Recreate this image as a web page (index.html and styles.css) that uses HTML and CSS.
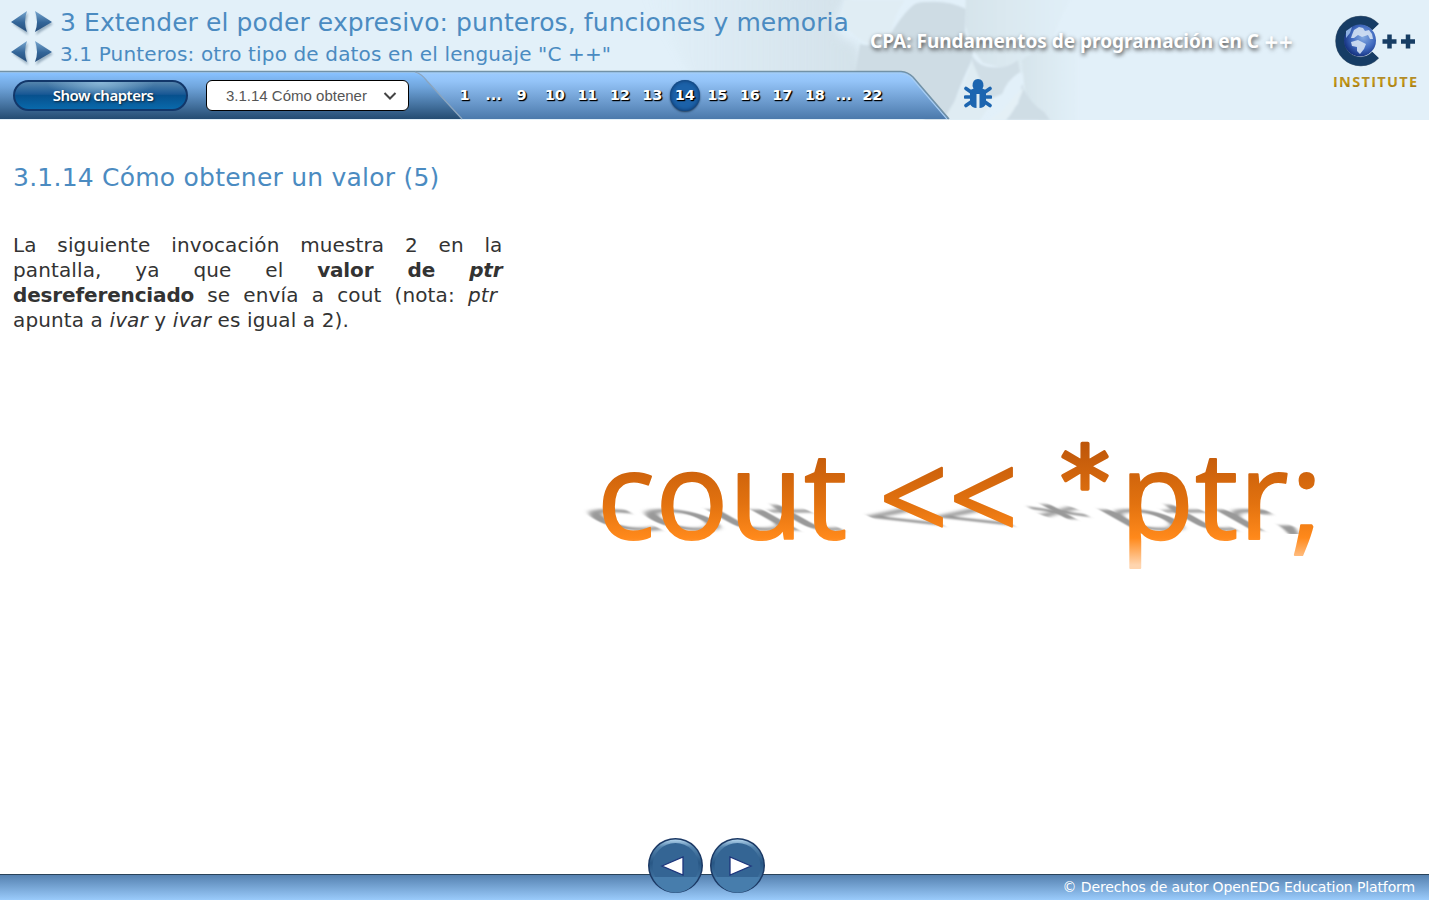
FILE: index.html
```html
<!DOCTYPE html>
<html lang="es">
<head>
<meta charset="utf-8">
<title>3.1.14 Cómo obtener un valor (5)</title>
<link rel="stylesheet" href="styles.css">
</head>
<body>
<svg class="defs" width="0" height="0">
  <defs>
    <linearGradient id="arrow" x1="0" y1="0" x2="0" y2="1"><stop offset="0" stop-color="#77a6cf"/><stop offset=".55" stop-color="#336598"/><stop offset="1" stop-color="#254d7b"/></linearGradient>
    <symbol id="arrows" viewBox="0 0 46 28">
      <g class="arrow-shadow"><path d="M3 14 18 3 16 14 18 25Z"/><path d="M26 3 43 14 26 25 29 14Z"/></g>
      <path d="M1 12 17 1Q13 12 17 22Z" fill="url(#arrow)"/><path d="M25 1 42 12 25 22Q29 12 25 1Z" fill="url(#arrow)"/>
    </symbol>
  </defs>
</svg>
<header class="header">
  <svg class="backdrop" width="1429" height="120" viewBox="0 0 1429 120">
    <defs>
      <linearGradient id="bar" x1="0" y1="0" x2="0" y2="1"><stop offset="0" stop-color="#9dccff"/><stop offset=".2" stop-color="#94c4f8"/><stop offset="1" stop-color="#4b79ab"/></linearGradient>
      <linearGradient id="tab" x1="0" y1="0" x2="0" y2="1"><stop offset="0" stop-color="#88c2ff"/><stop offset=".3" stop-color="#70a5dc"/><stop offset="1" stop-color="#244c72"/></linearGradient>
      <linearGradient id="fade"><stop offset="0" stop-color="#cedce4" stop-opacity="0"/><stop offset="1" stop-color="#cedce4"/></linearGradient>
      <linearGradient id="fadeout"><stop offset="0" stop-color="#d6e4eb"/><stop offset="1" stop-color="#e2f0f9"/></linearGradient>
      <filter id="soft"><feGaussianBlur stdDeviation="1"/></filter>
      <filter id="softer"><feGaussianBlur stdDeviation="5"/></filter>
    </defs>
    <rect width="1429" height="120" fill="#e2f0f9"/>
    <path d="M640 -10H850L835 20Q835 40 856 43L870 90H700Z" fill="url(#fade)" opacity=".75" filter="url(#softer)"/>
    <path d="M966 -10H1080Q1060 10 1050 50L1030 75 983 63 972 48 965 25Z" fill="url(#fadeout)" filter="url(#soft)"/>
    <path d="M1022 60Q1040 45 1080 50V130H1050Q1026 112 1024 84Z" fill="url(#fadeout)" filter="url(#soft)"/>
    <g filter="url(#soft)">
      <path d="M844 0H905Q894 15 891 34L880 48Q858 43 842 22Z" fill="#e0edf4"/>
      <path d="M860 44Q876 49 890 35 900 18 910 8 916 1 926 2 948 0 966 9L965 33Q969 45 973 52L971 62Q961 82 948 120H925L890 75H855Z" fill="#cedce4"/>
      <path d="M969 50Q976 66 990 67 1008 69 1018 60L1020 72Q1007 80 1002 94L980 103Q972 86 972 58Z" fill="#d0dee6"/>
      <path d="M1022 84Q1029 103 1044 112L1050 120H1000L1018 104Z" fill="#cfdde5"/>
      <path d="M946 115Q963 90 972 61L982 84 990 105 980 120H950Z" fill="#dfecf3"/>
      <path d="M1024 87Q1013 97 1001 112L989 120H1006Q1015 112 1024 87Z" fill="#e4f0f6"/>
    </g>
    <path d="M0 71.5H900Q907 72 912 76L949 119H0Z" fill="url(#bar)"/>
    <path d="M0 73H898Q907 74 911 77L947 119" fill="none" stroke="#a8cdf2" stroke-width="1.2"/>
    <path d="M0 71.5H901Q908 72 913 77L949 119" fill="none" stroke="#7292a7" stroke-width="1.5"/>
    <path d="M0 73H415Q421 74 427 81L462 119H0Z" fill="url(#tab)"/>
    <path d="M415 72Q422 74 427 81L462 119" fill="none" stroke="#8ba5be" stroke-width="1.3"/>
  </svg>
  <div class="titles">
    <div class="title-row"><svg class="arrows" width="46" height="28"><use href="#arrows"/></svg><h1 class="chapter">3 Extender el poder expresivo: punteros, funciones y memoria</h1></div>
    <div class="title-row"><svg class="arrows" width="46" height="28"><use href="#arrows"/></svg><h2 class="section">3.1 Punteros: otro tipo de datos en el lenguaje "C ++"</h2></div>
  </div>
  <div class="course">CPA: Fundamentos de programación en C <span class="plus">++</span></div>
  <svg class="logo" width="100" height="85" viewBox="0 0 100 85">
    <defs>
      <radialGradient id="globe" cx=".6" cy=".4" r=".65"><stop offset="0" stop-color="#85abe1"/><stop offset=".55" stop-color="#416bc0"/><stop offset="1" stop-color="#102c79"/></radialGradient>
      <linearGradient id="gold" x1="0" y1="0" x2="0" y2="1"><stop offset="0" stop-color="#8f7740"/><stop offset=".5" stop-color="#c99a1a"/><stop offset="1" stop-color="#8c6510"/></linearGradient>
    </defs>
    <path d="M50.500 17A20.5 20.5 0 1 0 50.500 45" fill="none" stroke="#52677b" stroke-width="9.5"/>
    <path d="M50.500 17A20.5 20.5 0 1 0 50.500 45" fill="none" stroke="#163c65" stroke-width="8.5"/>
    <circle cx="35" cy="30.5" r="16" fill="url(#globe)"/>
    <path d="M27 25 29 20 34 17 38 18 40 21 44 20 47 24 48 29 45 29 43 25 37 27 33 25 29 28 26 28ZM26 32 33 30 41 34 39 39 35 44 32 41 32 37 27 36Z" fill="#d3e1f3" opacity=".9"/>
    <path d="M21 21 27 17 25 23 21 28Z" fill="#8eb1e2"/>
    <path d="M57.5 31.5H71.5M64.5 24.5V38.500M76 31.500H90M83 24.500V38.500" stroke="#173d64" stroke-width="4.500"/>
    <text class="institute" x="8" y="77" textLength="84" fill="url(#gold)">INSTITUTE</text>
  </svg>
  <nav class="toolbar">
    <button class="chapters"><span>Show chapters</span></button>
    <div class="select"><span>3.1.14 Cómo obtener</span><svg width="14" height="10" viewBox="0 0 14 10"><path d="M1.500 2 7 7.500 12.500 2" fill="none" stroke="#444" stroke-width="2"/></svg></div>
    <div class="pages"><a class="one">1</a><a class="dots">...</a><a class="nine">9</a><a>10</a><a>11</a><a>12</a><a>13</a><a class="current">14</a><a>15</a><a>16</a><a>17</a><a>18</a><a class="dots end">...</a><a>22</a></div>
    <svg class="bug" width="28" height="30" viewBox="0 0 28 30">
      <path d="M8.500 7Q8.500 0 14 0T19.500 7L18 11H10Z" fill="#1c65b0"/>
      <path d="M6 11Q14 7 22 11V25Q20 29 15.500 29V15H12.500V29Q8 29 6 25Z" fill="#1c65b0"/>
      <path d="M7 13 2 9.500M6 18H1.500M7 23 2 26.500M21 13 26 9.500M22 18H26.500M21 23 26 26.500" stroke="#1c65b0" stroke-width="3.600" stroke-linecap="round"/>
    </svg>
  </nav>
</header>
<main class="content">
  <section class="lesson">
    <h3 class="heading">3.1.14 Cómo obtener un valor (5)</h3>
    <p class="text"><span class="line">La siguiente invocación muestra 2 en la</span><span class="line">pantalla, ya que el <b>valor de <i>ptr</i></b></span><span class="line third"><b>desreferenciado</b> se envía a cout (nota: <i>ptr</i></span><span class="line last">apunta a <i>ivar</i> y <i>ivar</i> es igual a 2).</span></p>
  </section>
  <svg class="code" width="760" height="160" viewBox="580 420 760 160">
    <defs>
      <linearGradient id="orange" gradientUnits="userSpaceOnUse" x1="0" y1="442" x2="0" y2="565"><stop offset="0" stop-color="#bd560a"/><stop offset=".5" stop-color="#e2720f"/><stop offset=".78" stop-color="#ff891b"/><stop offset="1" stop-color="#ffd5af"/></linearGradient>
      <filter id="shade" filterUnits="userSpaceOnUse" x="550" y="-150" width="860" height="220"><feGaussianBlur stdDeviation="1.800 4.500"/></filter>
      <clipPath id="ground"><rect x="560" y="480" width="780" height="54"/></clipPath>
    </defs>
    <g clip-path="url(#ground)"><g transform="matrix(1 0 .55 .31 0 530)" filter="url(#shade)"><text class="glyphs cast" aria-hidden="true" y="0" x="608 664 734 802 888 958">cout&lt;&lt;</text><text class="glyphs star cast" aria-hidden="true" x="1066" y="-8">*</text><text class="glyphs cast" aria-hidden="true" y="0" x="1126 1196 1242 1278">ptr;</text></g></g>
    <g fill="url(#orange)" stroke="url(#orange)">
      <text class="glyphs" y="538.500" x="597 655.500 729 804">cout</text>
      <text class="glyphs" y="541" x="879 949">&lt;&lt;</text>
      <text class="glyphs star" x="1060" y="518">*</text>
      <text class="glyphs" y="538.500" x="1120 1195 1239 1291">ptr;</text>
    </g>
  </svg>
</main>
<footer class="footer">
  <div class="pager">
    <svg width="55" height="55" viewBox="0 0 55 55"><defs><linearGradient id="disc" x1="0" y1="0" x2="0" y2="1"><stop offset="0" stop-color="#b2d4ed"/><stop offset=".15" stop-color="#5282ac"/><stop offset=".45" stop-color="#285785"/><stop offset="1" stop-color="#5388b6"/></linearGradient></defs><circle cx="27.500" cy="27.500" r="27.500" fill="#1b3965"/><circle cx="27.500" cy="27.500" r="26" fill="url(#disc)"/><circle cx="27.500" cy="28" r="23" fill="#346594"/><path d="M5 39H50A24 24 0 0 1 5 39" fill="#477dac"/><path d="M14 28 35 19V37Z" fill="#fff" stroke="#1d357c" stroke-width="1.300"/></svg>
    <svg width="55" height="55" viewBox="0 0 55 55"><circle cx="27.500" cy="27.500" r="27.500" fill="#1b3965"/><circle cx="27.500" cy="27.500" r="26" fill="url(#disc)"/><circle cx="27.500" cy="28" r="23" fill="#346594"/><path d="M5 39H50A24 24 0 0 1 5 39" fill="#477dac"/><path d="M41 28 20 19V37Z" fill="#fff" stroke="#1d357c" stroke-width="1.300"/></svg>
  </div>
  <span class="copyright">© Derechos de autor OpenEDG Education Platform</span>
</footer>
</body>
</html>
```
FILE: styles.css
```css
* { box-sizing: border-box; }
body { margin: 0; width: 1429px; height: 902px; overflow: hidden; display: flex; flex-direction: column; background: #fff; font-family: Verdana, "DejaVu Sans", sans-serif; color: #333; }
h1, h2, h3, p { margin: 0; font-weight: 400; }
.defs { position: absolute; }
.header { position: relative; isolation: isolate; height: 120px; display: grid; grid-template-columns: 870px 455px 104px; grid-template-rows: 72px 48px; flex: none; }
.backdrop { position: absolute; inset: 0; z-index: -1; }
.titles { padding: 9px 0 0 10px; color: #4b8bc1; }
.title-row { display: flex; align-items: center; height: 30px; gap: 4px; white-space: nowrap; }
.arrows { flex: none; }
.arrow-shadow { fill: #486680; opacity: .45; filter: blur(1px); }
.chapter { font-size: 25px; line-height: 30px; padding-bottom: 2px; letter-spacing: .1px; }
.section { font-size: 20px; line-height: 28px; letter-spacing: .145px; }
.course { padding-top: 28px; font: bold 19px/26px "Noto Sans", sans-serif; letter-spacing: 0; color: #fff; text-shadow: 1px 2px 4px #444; white-space: nowrap; }
.plus { font: 17.5px "DejaVu Sans", sans-serif; -webkit-text-stroke: .6px #fff; }
.logo { grid-row: 1 / 3; grid-column: 3; margin-top: 10px; }
.institute { font: bold 14.5px "Open Sans", sans-serif; }
.toolbar { grid-column: 1 / 3; grid-row: 2; display: flex; align-items: flex-start; padding: 8px 0 0 13px; }
.chapters { width: 175px; height: 31px; margin-right: 18px; padding: 0 0 1px 5px; border: 2px solid #12376a; border-radius: 16px; background: radial-gradient(ellipse at 50% 0, #8bb8d8 0, transparent 45%), linear-gradient(#5484ac 0, #195895 45%, #07518e 50%, #0969ab 100%); font: 600 15px "Noto Sans", sans-serif; letter-spacing: -.5px; color: #fff; text-shadow: 1px 1px 2px #123; }
.select { width: 203px; height: 31px; border: 1px solid #000; border-radius: 6px; background: #fff; display: flex; align-items: center; justify-content: space-between; padding: 0 11px 0 19px; font: 15px "Liberation Sans", sans-serif; color: #555; }
.pages { display: flex; align-items: center; height: 31px; margin-left: 47.5px; width: 507.500px; font-size: 14.5px; font-weight: bold; color: #fff; text-shadow: 1px 1px 1px #000, 1px 1px 1px #000; }
.pages a { width: 32.5px; height: 31px; line-height: 30px; text-align: center; flex: none; }
.pages .one { width: 16px; }
.pages .dots { width: 42px; }
.pages .nine { width: 14px; margin-right: 10px; }
.pages .current { width: 30px; margin: 0 1.25px; border-radius: 50%; background: #1c62a9; box-shadow: inset 0 0 4px #082c5d, 0 1px 2px #203b58; }
.pages .end { width: 25px; }
.bug { margin: -1px 0 0; }
.content { flex: 1; display: flex; min-height: 0; }
.lesson { width: 580px; padding: 43px 0 0 13px; flex: none; }
.heading { font-size: 25px; line-height: 30px; letter-spacing: .23px; color: #4b8bc1; white-space: nowrap; }
.text { margin-top: 40px; font-size: 20px; line-height: 25px; letter-spacing: .12px; }
.text b { letter-spacing: -.15px; }
.line { display: block; width: 489.5px; text-align-last: justify; white-space: nowrap; }
.third { width: 484px; }
.last { text-align-last: left; }
.code { margin-top: 300px; flex: none; overflow: visible; }
.glyphs { font: 400 121px "Open Sans", "Noto Sans", sans-serif; stroke-width: 2px; stroke-linejoin: round; }
.star { font: 400 100px "DejaVu Sans", sans-serif; stroke-width: 3.5px; }
.cast { fill: #777; stroke: #777; opacity: .75; }
.footer { position: relative; flex: none; height: 26px; margin-bottom: 2px; border-top: 1px solid #29435a; background: linear-gradient(#5581b0, #9acbfb); display: flex; align-items: center; justify-content: flex-end; padding: 0 14px 2px 0; color: #fff; font-size: 14px; letter-spacing: -.12px; }
.pager { position: absolute; left: 648px; top: -37px; display: flex; gap: 7px; }
```
